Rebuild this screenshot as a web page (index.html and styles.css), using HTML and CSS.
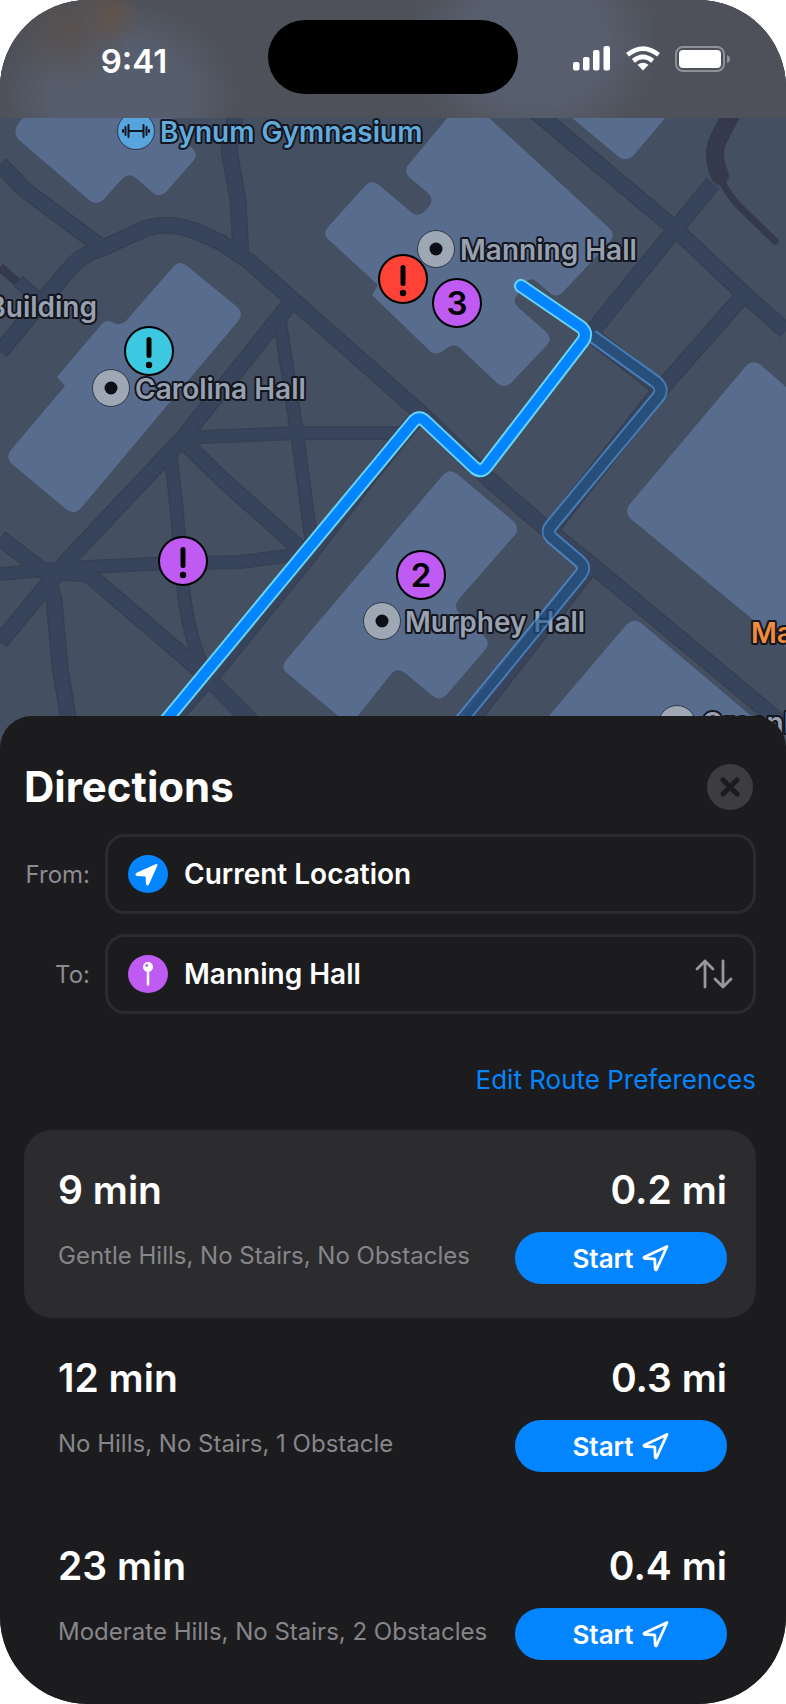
FILE: index.html
```html
<!DOCTYPE html>
<html lang="en">
<head>
<meta charset="utf-8">
<meta name="viewport" content="width=device-width, initial-scale=1">
<title>Directions</title>
<link rel="stylesheet" href="styles.css">
</head>
<body>
<svg class="symbols" aria-hidden="true">
  <symbol id="arrow" viewBox="0 0 28 28">
    <path d="M25 2.5 L14.5 25.5 Q13.6 26.6 13.2 25 L12.8 15.4 Q12.8 14.9 12.2 14.9 L2.8 14.5 Q1.2 14 2.6 13 Z" fill="none" stroke="currentColor" stroke-width="2.8" stroke-linejoin="round"/>
  </symbol>
  <symbol id="place" viewBox="-20 -20 40 40">
    <circle r="18.5" fill="#9ea7b4" stroke="#30384a"/>
    <circle r="6.5" fill="#0d0f18"/>
  </symbol>
  <symbol id="alert" viewBox="-26 -26 52 52">
    <circle r="24" fill="currentColor" stroke="#000" stroke-width="2"/>
    <path d="M0-11.5V4.500" stroke="#000" stroke-width="5" stroke-linecap="round"/>
    <circle cy="14" r="3.200" fill="#000"/>
  </symbol>
</svg>

<main class="phone">
  <section class="map" aria-label="Campus map">
    <svg class="map-canvas" viewBox="0 0 786 750" role="img" aria-label="Map with walking routes to Manning Hall">
      <rect width="786" height="750" class="land"/>
      <g class="building">
        <path d="M24 117 Q10 130 19 140 L89 200 Q96 206 103 200 L122 179 Q129 172 136 178 L153 193 Q160 198 166 192 L194 160 Q198 155 193 149 L186 143 L173 117 V70 L110 40 L60 60 Z"/>
        <path d="M448 117 L409 164 Q403 171 409 177 L428 193 Q434 199 430 205 L425 211 Q418 218 411 212 L379 185 Q372 179 366 185 L328 227 Q322 233 328 239 L378 285 L372 295 L430 351 Q436 356 443 351 L447 348 Q453 343 459 347 L497 383 Q504 389 511 383 L547 345 Q553 339 546 332 L519 308 Q512 302 516 297 L526 282 Q530 277 536 281 L550 293 Q556 298 562 293 L608 244 Q617 235 609 228 L488 117 L465 97 Z"/>
        <path d="M515 68 L571 117 L619 157 Q626 162 633 156 L666 117 L730 45 L670 -10 H580 Z"/>
        <path d="M174 266 Q180 260 187 266 L236 306 Q244 313 239 320 L81 508 Q74 516 66 509 L12 464 Q5 457 11 450 L65 386 L57 377 L101 325 Q106 319 112 322 Q120 327 126 321 Z"/>
        <path d="M786 387 L761 365 Q753 359 746 366 L630 504 Q624 512 631 519 L786 647 Z"/>
        <path d="M443 475 Q450 468 457 474 L512 520 Q521 528 514 536 L459 599 Q453 606 459 613 L484 636 Q491 643 485 650 L448 693 Q441 702 433 696 L405 673 Q398 667 391 674 L350 726 L287 673 Q280 667 287 659 Z"/>
        <path d="M627 624 Q634 618 641 623 L768 730 V750 H520 Z"/>
      </g>

      <g class="walks-edge">
        <path d="M0 164 L25 190 L92 240 L103 248"/>
        <path d="M0 352 L43 300 L72 266 Q84 253 103 248 L142 230 Q168 219 200 233 L222 243 L250 262 L293 300 L423 415 L490 480 L536 520 L593 566 L786 727"/>
        <path d="M235 90 V117 L229 150 L238 200 L241 255"/>
        <path class="narrow" d="M18 281 L42 302"/>
        <path d="M293 300 L183 438 L67 561 L0 642"/>
        <path class="narrow" d="M280 322 L297 433 L312 545"/>
        <path class="narrow" d="M180 438 L297 433 H400"/>
        <path class="narrow" d="M170 448 L177 513 L183 585 Q188 635 204 670"/>
        <path d="M180 438 L223 480 L307 555"/>
        <path class="narrow" d="M0 574 L67 568 L150 564 L240 562 L310 553"/>
        <path d="M0 538 L43 571 L88 574 L200 670 L252 722"/>
        <path d="M46 568 L54 600 L60 667 L69 722"/>
        <path d="M414 421 L365 482 L304 562 L218 668 L170 722"/>
        <path d="M536 112 L673 227 L743 293 L786 331"/>
        <path d="M713 183 L590 334 L661 389"/>
        <path d="M741 298 L661 389 L552 528 M588 570 L470 722"/>
      </g>
      <g class="walks-fill">
        <path d="M0 164 L25 190 L92 240 L103 248"/>
        <path d="M0 352 L43 300 L72 266 Q84 253 103 248 L142 230 Q168 219 200 233 L222 243 L250 262 L293 300 L423 415 L490 480 L536 520 L593 566 L786 727"/>
        <path d="M235 90 V117 L229 150 L238 200 L241 255"/>
        <path class="narrow" d="M18 281 L42 302"/>
        <path d="M293 300 L183 438 L67 561 L0 642"/>
        <path class="narrow" d="M280 322 L297 433 L312 545"/>
        <path class="narrow" d="M180 438 L297 433 H400"/>
        <path class="narrow" d="M170 448 L177 513 L183 585 Q188 635 204 670"/>
        <path d="M180 438 L223 480 L307 555"/>
        <path class="narrow" d="M0 574 L67 568 L150 564 L240 562 L310 553"/>
        <path d="M0 538 L43 571 L88 574 L200 670 L252 722"/>
        <path d="M46 568 L54 600 L60 667 L69 722"/>
        <path d="M414 421 L365 482 L304 562 L218 668 L170 722"/>
        <path d="M536 112 L673 227 L743 293 L786 331"/>
        <path d="M713 183 L590 334 L661 389"/>
        <path d="M741 298 L661 389 L552 528 M588 570 L470 722"/>
      </g>
      <g class="lane">
        <path d="M0 267 L17 282" stroke-width="9" stroke-linecap="butt"/>
        <path d="M745 90 Q728 120 718 140 Q711 155 720 176" stroke-width="18"/>
        <path d="M721 180 Q730 198 742 209 L775 241" stroke-width="7"/>
      </g>

      <use href="#place" x="91" y="368" width="40" height="40"/>
      <use href="#place" x="416" y="229" width="40" height="40"/>
      <use href="#place" x="362" y="601" width="40" height="40"/>
      <use href="#place" x="657" y="704" width="40" height="40"/>
      <g transform="translate(136 131)">
        <circle r="18.500" fill="#57a5dc" stroke="#30384a"/>
        <path d="M-6 0H6M-7.500-6V6M7.500-6V6M-10.500-4V4M10.500-4V4M-13-1V1M13-1V1" fill="none" stroke="#101522" stroke-width="2" stroke-linecap="round"/>
      </g>

      <g class="label">
        <text class="sport" x="160" y="142">Bynum Gymnasium</text>
        <text x="97" y="317" text-anchor="end">Building</text>
        <text x="135" y="399">Carolina Hall</text>
        <text x="460" y="260">Manning Hall</text>
        <text x="405" y="632">Murphey Hall</text>
        <text x="702" y="733">Greenlaw</text>
        <text class="food" x="751" y="643">Ma</text>
      </g>

      <g class="route route-alt">
        <path class="casing" d="M592 336 L656 382 Q664 389 658 397 L551 526 Q546 532 552 538 L579 561 Q586 567 581 574 L460 722"/>
        <path class="core" d="M588 333 L656 382 Q664 389 658 397 L551 526 Q546 532 552 538 L579 561 Q586 567 581 574 L460 722"/>
      </g>
      <g class="route">
        <path class="casing" d="M521 286 L581 327 Q588 333 583 341 L486 467 Q481 473 475 468 L425 421 Q419 415 413 422 L163 724"/>
        <path class="core" d="M521 286 L581 327 Q588 333 583 341 L486 467 Q481 473 475 468 L425 421 Q419 415 413 422 L163 724"/>
      </g>

      <use href="#alert" class="cyan" x="123" y="325" width="52" height="52"/>
      <use href="#alert" class="red" x="377" y="253" width="52" height="52"/>
      <use href="#alert" class="purple" x="157" y="535" width="52" height="52"/>
      <g class="count">
        <circle cx="457" cy="303" r="24"/><text x="457" y="315">3</text>
        <circle cx="421" cy="575" r="24"/><text x="421" y="587">2</text>
      </g>
    </svg>

    <header class="status">
      <time class="clock">9:41</time>
      <div class="island"></div>
      <div class="status-icons">
        <svg width="38" height="26" viewBox="0 0 38 26" fill="#fff" role="img" aria-label="Signal">
          <rect x="0" y="16" width="6.500" height="8.500" rx="2"/><rect x="10" y="11" width="6.500" height="13.500" rx="2"/><rect x="20" y="4" width="6.500" height="20.500" rx="2"/><rect x="30.500" y="0" width="6.500" height="24.500" rx="2"/>
        </svg>
        <svg width="36" height="26" viewBox="0 0 36 26" role="img" aria-label="Wi-Fi">
          <g fill="none" stroke="#fff" stroke-width="4.600">
            <path d="M2.500 8.800 Q18-3.600 33.500 8.800"/>
            <path d="M8.300 14.900 Q18 7 27.700 14.900"/>
          </g>
          <path d="M12.500 18.800 Q18 14.600 23.500 18.800 L18 24.500Z" fill="#fff"/>
        </svg>
        <svg width="57" height="26" viewBox="0 0 57 26" role="img" aria-label="Battery">
          <rect x="1" y="1" width="48" height="24" rx="7" fill="none" stroke="#8e9199" stroke-width="2"/>
          <rect x="4" y="4" width="42" height="18" rx="4" fill="#fff"/>
          <path d="M52 9 Q55 10 55 13 Q55 16 52 17Z" fill="#8e9199"/>
        </svg>
      </div>
    </header>
  </section>

  <section class="sheet">
    <header class="sheet-head">
      <h1>Directions</h1>
      <button class="close" type="button" aria-label="Close">
        <svg width="20" height="20" viewBox="0 0 20 20"><path d="M3 3L17 17M17 3L3 17" stroke="#1c1c1e" stroke-width="5" stroke-linecap="round"/></svg>
      </button>
    </header>

    <form class="stops">
      <label for="from">From:</label>
      <div class="field">
        <svg class="badge" width="40" height="40" viewBox="0 0 40 40" aria-hidden="true">
          <ellipse cx="20" cy="20" rx="20" ry="19" fill="#0385ff"/>
          <path d="M28.500 11 L20 30 Q19.300 31.200 19 30 L18.600 22.400 Q18.500 21.600 17.800 21.600 L9 21 Q8 20.400 9 19.700Z" fill="#fff" stroke="#fff" stroke-width="2" stroke-linejoin="round"/>
        </svg>
        <input id="from" type="text" value="Current Location">
      </div>
      <label for="to">To:</label>
      <div class="field">
        <svg class="badge" width="40" height="40" viewBox="0 0 40 40" aria-hidden="true">
          <ellipse cx="20" cy="20" rx="20" ry="19" fill="#bf5af2"/>
          <path d="M20 14V30.500" stroke="#fff" stroke-width="2.500" stroke-linecap="round"/>
          <circle cx="20" cy="13" r="5" fill="#fff"/><circle cx="18.800" cy="11.500" r="1.400" fill="#bf5af2"/>
        </svg>
        <input id="to" type="text" value="Manning Hall">
        <button class="swap" type="button" aria-label="Swap start and destination">
          <svg width="38" height="30" viewBox="0 0 38 30"><path d="M10 28V2M2 10L10 2L18 10M28 2V28M20 20L28 28L36 20" fill="none" stroke="#98979e" stroke-width="2.800" stroke-linecap="round" stroke-linejoin="round"/></svg>
        </button>
      </div>
    </form>

    <a class="prefs" href="#preferences">Edit Route Preferences</a>

    <ul class="routes">
      <li class="option selected">
        <div class="line figures"><span>9 min</span><span>0.2 mi</span></div>
        <div class="line"><p>Gentle Hills, No Stairs, No Obstacles</p>
          <button class="start" type="button">Start <svg width="28" height="28" aria-hidden="true"><use href="#arrow"/></svg></button></div>
      </li>
      <li class="option">
        <div class="line figures"><span>12 min</span><span>0.3 mi</span></div>
        <div class="line"><p>No Hills, No Stairs, 1 Obstacle</p>
          <button class="start" type="button">Start <svg width="28" height="28" aria-hidden="true"><use href="#arrow"/></svg></button></div>
      </li>
      <li class="option">
        <div class="line figures"><span>23 min</span><span>0.4 mi</span></div>
        <div class="line"><p>Moderate Hills, No Stairs, 2 Obstacles</p>
          <button class="start" type="button">Start <svg width="28" height="28" aria-hidden="true"><use href="#arrow"/></svg></button></div>
      </li>
    </ul>
  </section>
</main>
</body>
</html>
```
FILE: styles.css
```css
* { box-sizing: border-box; }

body {
  margin: 0;
  background: #fff;
  color: #fff;
  font-family: Inter, "Liberation Sans", sans-serif;
}

h1, p, ul { margin: 0; padding: 0; }
ul { list-style: none; }
svg { display: block; flex: none; }
button, input { font: inherit; color: inherit; border: 0; padding: 0; background: none; }

.symbols { position: absolute; width: 0; height: 0; }

.phone {
  overflow: hidden;
  border-radius: 88px;
  background: #1c1c1e;
}

/* Map */
.map { position: relative; }
.map-canvas { width: 100%; height: auto; }

.land { fill: #454f62; }
.building { fill: #586d8e; }
.walks-edge, .walks-fill { fill: none; stroke-linejoin: round; }
.walks-edge { stroke: #364052; stroke-width: 17; }
.walks-fill { stroke: #38445b; stroke-width: 14; }
.walks-edge .narrow { stroke-width: 14; }
.walks-fill .narrow { stroke-width: 11; }
.lane { fill: none; stroke: #343a4c; stroke-linecap: round; }

.label {
  fill: #98a1b0;
  stroke: #14161f;
  stroke-width: 4;
  stroke-linejoin: round;
  paint-order: stroke;
  font-size: 28px;
  font-weight: 600;
}
.label .sport { fill: #62abdd; }
.label .food { fill: #f08c3c; }

.route { fill: none; stroke-linejoin: round; stroke-linecap: round; }
.route .casing { stroke: #6ad4f7; stroke-width: 14; }
.route .core { stroke: #0385ff; stroke-width: 10; }
.route-alt { opacity: 0.6; stroke-linecap: butt; }
.route-alt .casing { stroke: #51a3f5; }
.route-alt .core { stroke: #1f5590; }

.cyan { color: #3cc8e1; }
.red { color: #ff4136; }
.purple { color: #bf5af2; }
.count circle { fill: #bf5af2; stroke: #000; stroke-width: 2; }
.count text { font-size: 33px; font-weight: 600; text-anchor: middle; }

/* Status bar */
.status {
  position: absolute;
  inset: 0 0 auto;
  display: grid;
  grid-template-columns: 1fr 250px 1fr;
  align-items: center;
  justify-items: center;
  padding: 20px 0 24px;
  background:
    radial-gradient(circle at 112px 16px, rgba(102, 84, 72, 0.8), transparent 30px),
    radial-gradient(circle at 70px 30px, rgba(88, 80, 78, 0.9), transparent 60px),
    radial-gradient(ellipse at 120px 96px, #565d6c 40%, transparent 70%) 0 0 / 240px 118px no-repeat,
    radial-gradient(ellipse at 50% 30%, #575e6d 40%, transparent 75%) 76% 0 / 240px 150px no-repeat,
    #4e5159;
}
.clock { padding-top: 8px; font-size: 33px; font-weight: 600; line-height: 40px; }
.island { width: 100%; height: 74px; border-radius: 37px; background: #000; }
.status-icons { display: flex; align-items: center; gap: 14px; padding-top: 4px; }

/* Sheet */
.sheet {
  position: relative;
  margin-top: -34px;
  padding: 48px 30px 10px 24px;
  border-radius: 32px 32px 0 0;
  background: #1c1c1e;
}
.sheet-head {
  display: flex;
  align-items: center;
  justify-content: space-between;
  padding-right: 3px;
}
h1 { font-size: 42px; font-weight: 700; line-height: 46px; }
.close {
  display: grid;
  place-items: center;
  width: 46px;
  height: 46px;
  border-radius: 50%;
  background: #3d3d40;
}

.stops {
  display: grid;
  grid-template-columns: 66px 1fr;
  align-items: center;
  gap: 20px 15px;
  margin-top: 24px;
}
.stops label { color: #8c8b92; font-size: 24px; text-align: right; }
.field {
  display: flex;
  align-items: center;
  gap: 16px;
  height: 80px;
  padding: 0 20px;
  border: 3px solid #2c2c2e;
  border-radius: 20px;
}
.field input { flex: 1; min-width: 0; font-size: 28px; font-weight: 600; line-height: 36px; outline: 0; }

.prefs {
  display: block;
  margin: 50px 0 34px;
  color: #0385ff;
  font-size: 26px;
  line-height: 32px;
  text-align: right;
  text-decoration: none;
}

.option { padding: 36px 29px 34px 34px; border-radius: 28px; }
.option.selected { background: #2c2c2e; }
.line { display: flex; justify-content: space-between; }
.figures { margin-bottom: 18px; font-size: 39px; font-weight: 600; line-height: 48px; }
.line p { color: #86868a; font-size: 24px; line-height: 48px; }
.start {
  display: flex;
  align-items: center;
  justify-content: center;
  gap: 8px;
  width: 212px;
  height: 52px;
  border-radius: 26px;
  background: #0385ff;
  font-size: 26px;
  font-weight: 600;
}
```
